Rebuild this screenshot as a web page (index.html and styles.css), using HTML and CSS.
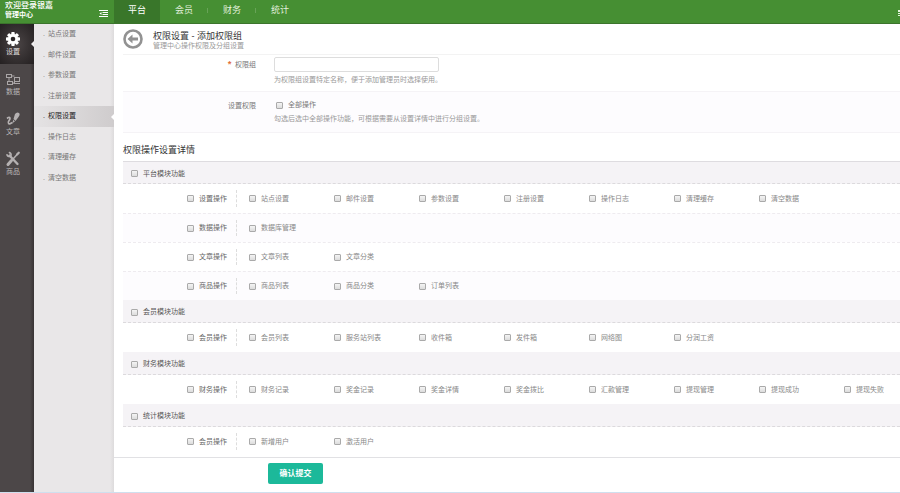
FILE: index.html
```html
<!DOCTYPE html>
<html lang="zh-CN">
<head>
<meta charset="utf-8">
<title>管理中心</title>
<link rel="stylesheet" href="styles.css">
</head>
<body>
<header class="topbar">
  <div class="brand">
    <div class="brand-text"><strong>欢迎登录银嘉</strong><b>管理中心</b></div>
    <button class="fold" type="button" aria-label="折叠菜单">
      <svg viewBox="0 0 9 7" width="9" height="7"><path d="M0 .5h9M3.500 2.500H9M3.500 4.500H9M0 6.500h9" stroke="#fff" fill="none"/><path d="M2.500 2v3L.5 3.500z" fill="#fff"/></svg>
    </button>
  </div>
  <nav class="tabs">
    <a class="tab tab-on" href="#">平台</a>
    <a class="tab" href="#">会员</a>
    <a class="tab" href="#">财务</a>
    <a class="tab" href="#">统计</a>
  </nav>
  <span class="edge-mark"></span>
</header>
<div class="frame">
  <nav class="rail">
    <a class="rail-item rail-on" href="#">
      <svg viewBox="0 0 16 16" width="16" height="16"><g fill="#fff"><g id="teeth"><rect x="6.300" y="1" width="3.400" height="14" rx=".8"/><rect x="1" y="6.300" width="14" height="3.400" rx=".8"/></g><use href="#teeth" transform="rotate(45 8 8)"/><circle cx="8" cy="8" r="5"/></g><circle cx="8" cy="8" r="2.300" fill="#2b2627"/></svg>
      <span>设置</span>
    </a>
    <a class="rail-item" href="#">
      <svg viewBox="0 0 16 16" width="16" height="16"><g fill="none" stroke="#aaa6a7"><rect x="1.500" y="3.500" width="5" height="3"/><rect x="9.500" y="6.500" width="5" height="4"/><rect x="2.500" y="10.500" width="5" height="3"/><path d="M6.500 5h3M4 6.500v4M7.500 12h2v-2M8.500 12.500H15"/></g></svg>
      <span>数据</span>
    </a>
    <a class="rail-item" href="#">
      <svg viewBox="0 0 16 16" width="16" height="16"><path d="M10 3q2-2.500 4-1 1.500 1.500-.5 4L10.500 10 8.500 8z" fill="#b5b1b2"/><path d="M8.200 8.800l1.700 1.700L7.500 12z" fill="#b5b1b2"/><path d="M2 7.500q3-2.500 3 0c0 2-3 3.500-1.500 5 1.200 1 2.500-.3 4-1" fill="none" stroke="#b5b1b2" stroke-width="1.700"/></svg>
      <span>文章</span>
    </a>
    <a class="rail-item" href="#">
      <svg viewBox="0 0 16 16" width="16" height="16"><g fill="none" stroke="#b5b1b2" stroke-linecap="round"><path d="M4.500 4.500l8 8.500" stroke-width="2.400"/><path d="M2 3.800a2.300 2.300 0 0 0 3.800 1A2.300 2.300 0 0 0 4.500 1.600" stroke-width="1.700"/><path d="M13 2.500L8.500 7.500" stroke-width="1.500"/><path d="M6.500 9.500l-3.500 4" stroke-width="3"/><path d="M12 3.500l1.800-1.800" stroke-width="2.200"/></g></svg>
      <span>商品</span>
    </a>
  </nav>
  <nav class="submenu">
    <ul>
      <li><a href="#">站点设置</a></li>
      <li><a href="#">邮件设置</a></li>
      <li><a href="#">参数设置</a></li>
      <li><a href="#">注册设置</a></li>
      <li class="sub-on"><a href="#">权限设置</a></li>
      <li><a href="#">操作日志</a></li>
      <li><a href="#">清理缓存</a></li>
      <li><a href="#">清空数据</a></li>
    </ul>
  </nav>
  <main class="main">
    <form>
      <div class="page-head">
        <a class="back" href="#" aria-label="返回"><svg viewBox="0 0 20 20" width="20" height="20"><circle cx="10" cy="10" r="8.500" fill="none" stroke="#929292" stroke-width="2.600"/><path d="M4.500 10l5-4.500v3H15v3H9.500v3z" fill="#929292"/></svg></a>
        <div><h1>权限设置 - 添加权限组</h1><p>管理中心操作权限及分组设置</p></div>
      </div>
      <div class="field">
        <label class="field-label" for="group"><i>*</i>权限组</label>
        <div><input class="text" id="group" type="text"><p class="hint">为权限组设置特定名称，便于添加管理员时选择使用。</p></div>
      </div>
      <div class="field field-alt">
        <span class="field-label">设置权限</span>
        <div><label class="check check-all"><input type="checkbox">全部操作</label><p class="hint">勾选后选中全部操作功能，可根据需要从设置详情中进行分组设置。</p></div>
      </div>
      <h2>权限操作设置详情</h2>

      <section class="module module-first">
        <h3><label class="check"><input type="checkbox">平台模块功能</label></h3>
        <div class="row">
          <label class="check group"><input type="checkbox">设置操作</label>
          <div class="items">
            <label class="check"><input type="checkbox">站点设置</label>
            <label class="check"><input type="checkbox">邮件设置</label>
            <label class="check"><input type="checkbox">参数设置</label>
            <label class="check"><input type="checkbox">注册设置</label>
            <label class="check"><input type="checkbox">操作日志</label>
            <label class="check"><input type="checkbox">清理缓存</label>
            <label class="check"><input type="checkbox">清空数据</label>
          </div>
        </div>
        <div class="row">
          <label class="check group"><input type="checkbox">数据操作</label>
          <div class="items">
            <label class="check"><input type="checkbox">数据库管理</label>
          </div>
        </div>
        <div class="row">
          <label class="check group"><input type="checkbox">文章操作</label>
          <div class="items">
            <label class="check"><input type="checkbox">文章列表</label>
            <label class="check"><input type="checkbox">文章分类</label>
          </div>
        </div>
        <div class="row">
          <label class="check group"><input type="checkbox">商品操作</label>
          <div class="items">
            <label class="check"><input type="checkbox">商品列表</label>
            <label class="check"><input type="checkbox">商品分类</label>
            <label class="check"><input type="checkbox">订单列表</label>
          </div>
        </div>
      </section>

      <section class="module">
        <h3><label class="check"><input type="checkbox">会员模块功能</label></h3>
        <div class="row">
          <label class="check group"><input type="checkbox">会员操作</label>
          <div class="items">
            <label class="check"><input type="checkbox">会员列表</label>
            <label class="check"><input type="checkbox">服务站列表</label>
            <label class="check"><input type="checkbox">收件箱</label>
            <label class="check"><input type="checkbox">发件箱</label>
            <label class="check"><input type="checkbox">网络图</label>
            <label class="check"><input type="checkbox">分润工资</label>
          </div>
        </div>
      </section>

      <section class="module">
        <h3><label class="check"><input type="checkbox">财务模块功能</label></h3>
        <div class="row">
          <label class="check group"><input type="checkbox">财务操作</label>
          <div class="items">
            <label class="check"><input type="checkbox">财务记录</label>
            <label class="check"><input type="checkbox">奖金记录</label>
            <label class="check"><input type="checkbox">奖金详情</label>
            <label class="check"><input type="checkbox">奖金拨比</label>
            <label class="check"><input type="checkbox">汇款管理</label>
            <label class="check"><input type="checkbox">提现管理</label>
            <label class="check"><input type="checkbox">提现成功</label>
            <label class="check"><input type="checkbox">提现失败</label>
          </div>
        </div>
      </section>

      <section class="module">
        <h3><label class="check"><input type="checkbox">统计模块功能</label></h3>
        <div class="row">
          <label class="check group"><input type="checkbox">会员操作</label>
          <div class="items">
            <label class="check"><input type="checkbox">新增用户</label>
            <label class="check"><input type="checkbox">激活用户</label>
          </div>
        </div>
      </section>

      <div class="actions"><button class="submit" type="submit">确认提交</button></div>
    </form>
  </main>
</div>
</body>
</html>
```
FILE: styles.css
```css
* { box-sizing: border-box; }
body {
  margin: 0;
  min-height: 100vh;
  display: flex;
  flex-direction: column;
  overflow-x: hidden;
  border-bottom: 1px solid #cfdfee;
  background: #fff;
  color: #777;
  font: 7px/10px "Liberation Sans", "Noto Sans CJK SC", sans-serif;
}
h1, h2, h3, p, ul { margin: 0; padding: 0; font-weight: 400; }
a { color: inherit; text-decoration: none; }
svg { display: block; }

/* top bar */
.topbar {
  display: flex;
  height: 24px;
  background: #468f33;
  border-bottom: 1px solid #3b742c;
  color: #fff;
}
.brand {
  flex: none;
  width: 114px;
  padding: 0 6px 0 5px;
  display: flex;
  justify-content: space-between;
}
.brand strong, .brand b { display: block; line-height: 10px; }
.brand-text { padding-top: 1px; }
.brand strong { font-size: 8px; font-weight: 500; }
.brand b { line-height: 8px; }
.fold { align-self: flex-end; margin: 0 0 6px; padding: 0; border: 0; background: none; }
.tabs { display: flex; flex: 1; }
.tab {
  position: relative;
  width: 48px;
  font-size: 9px;
  line-height: 20px;
  text-align: center;
  color: #e2f0dd;
}
.tab + .tab::after {
  content: "";
  position: absolute;
  right: 0;
  top: 8px;
  height: 5px;
  border-right: 1px solid #67a357;
}
.tabs .tab:last-child::after { display: none; }
.tab-on { width: 46px; background: #39762a; color: #fff; }
.edge-mark { width: 2px; height: 6px; margin-top: 10px; border: 1px dotted #e4f4df; }

/* side navigation */
.frame { display: flex; flex: 1; }
.rail {
  flex: none;
  width: 34px;
  background: linear-gradient(90deg, #4c4748 30px, #383334);
  color: #bab6b7;
}
.rail-item {
  position: relative;
  display: flex;
  flex-direction: column;
  align-items: center;
  height: 40px;
  padding: 7px 8px 0 0;
}
.rail-on { background: radial-gradient(#4a4445, #242021); color: #e0dede; }
.rail-on::after {
  content: "";
  position: absolute;
  right: 0;
  top: 17px;
  border: 3px solid transparent;
  border-left: 0;
  border-right-color: #f0eeef;
}
.submenu {
  flex: none;
  width: 80px;
  background: linear-gradient(90deg, #e9e7e8 76px, #dddbdc);
}
.submenu ul { display: grid; grid-auto-rows: 1fr; min-height: 164px; list-style: none; }
.submenu li { position: relative; display: flex; align-items: center; padding-left: 9px; }
.submenu li::before { content: "."; width: 5px; }
.sub-on { background: linear-gradient(90deg, #e5e3e4, #cfcccd); color: #222; }
.sub-on::after {
  content: "";
  position: absolute;
  right: 0;
  top: 8px;
  border: 3px solid transparent;
  border-left: 0;
  border-right-color: #fff;
}

/* page */
.main { flex: 1; min-width: 0; }
.page-head {
  display: flex;
  align-items: center;
  gap: 10px;
  height: 31px;
  margin-left: 9px;
  border-bottom: 1px solid #f3f3f3;
}
h1, h2 { font-size: 9px; color: #333; }
h1 { line-height: 12px; }
h2 { margin-left: 9px; padding: 10px 0 4px; line-height: 14px; }
.page-head p { line-height: 8px; color: #999; }
.page-head div { padding-top: 2px; }
.field {
  display: grid;
  grid-template-columns: 133px 1fr;
  column-gap: 18px;
  margin-left: 9px;
  padding: 2px 0;
  border-bottom: 1px solid #f5f3f6;
}
.field-alt { padding: 8px 0; background: #fdfcfe; }
.field-label { text-align: right; line-height: 14px; }
.field-alt .field-label { line-height: 12px; }
.field-label i { margin-right: 4px; font-size: 9px; font-weight: 700; color: #e2703a; }
.text {
  display: block;
  width: 165px;
  height: 15px;
  padding: 0 4px;
  border: 1px solid #ddd;
  border-radius: 2px;
  font: inherit;
}
.hint { color: #999; }
.field .text + .hint { padding: 3px 0 4px; }
.check { display: flex; align-items: center; gap: 5px; white-space: nowrap; }
.check input {
  appearance: none;
  flex: none;
  width: 7px;
  height: 7px;
  margin: 0;
  border: 1px solid #aaa;
  border-radius: 1px;
  background: linear-gradient(#f4f4f4, #dcdcdc);
}
.check-all { padding: 0 0 4px 2px; }

/* permission modules */
.module { margin-left: 9px; }
.module h3 {
  display: flex;
  height: 23px;
  padding: 2px 0 0 8px;
  background: #f5f3f6;
  border-bottom: 1px dashed #dcdadd;
  font-size: 7px;
  color: #555;
}
.module-first h3 { border-top: 1px solid #dedce0; }
.row {
  display: grid;
  grid-template-columns: 114px 1fr;
  height: 29px;
}
.row + .row { border-top: 1px dashed #eeebef; }
.row:nth-child(odd) { background: #fdfcfe; }
.group {
  justify-content: flex-end;
  margin: 6px 0;
  padding-right: 9px;
  border-right: 1px dashed #ddd;
  color: #666;
}
.items { display: flex; padding-left: 12px; color: #888; min-width: 0; }
.items .check { flex: 0 0 85px; }

.actions { margin-top: 1px; padding: 5px 0 7px 154px; border-top: 1px solid #e1e1e4; }
.submit {
  width: 55px;
  height: 21px;
  padding: 0;
  border: 0;
  border-radius: 2px;
  background: #1cb99a;
  color: #fff;
  font: bold 8px/20px "Liberation Sans", "Noto Sans CJK SC", sans-serif;
}
```
